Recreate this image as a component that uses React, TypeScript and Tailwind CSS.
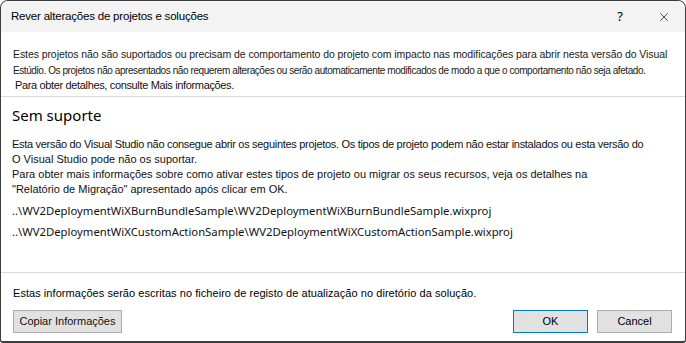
import { X } from 'lucide-react';

const seg = "font-['Noto_Sans',sans-serif]";
const ms = "font-['Liberation_Sans',Arial,sans-serif]";

export default function App() {
  const paths = [
    '..\\WV2DeploymentWiXBurnBundleSample\\WV2DeploymentWiXBurnBundleSample.wixproj',
    '..\\WV2DeploymentWiXCustomActionSample\\WV2DeploymentWiXCustomActionSample.wixproj',
  ];

  return (
    <div className="w-[686px] h-[343px] bg-white">
      <div className="w-full h-full flex flex-col border border-b-2 border-[#3c3c3c] rounded-t-lg rounded-b-[3px] overflow-hidden bg-white text-black">
        {/* Title bar */}
        <div className="h-[31px] shrink-0 bg-[#f3f3f3] flex items-center pl-[10px] pr-[14px]">
          <span className={`${ms} text-[11.5px] tracking-[-0.2px] flex-1`}>Rever alterações de projetos e soluções</span>
          <span className={`${seg} text-[13px] mr-[34px]`}>?</span>
          <X className="w-[14px] h-[14px]" strokeWidth={1.2} />
        </div>

        {/* Info header */}
        <div className={`${ms} h-[65px] shrink-0 pl-[12px] pt-[14px] border-b border-[#d9d9d9] text-[#1a1a1a]`}>
          <div className="text-[10.5px] leading-[17px] whitespace-nowrap tracking-[-0.08px]">
            Estes projetos não são suportados ou precisam de comportamento do projeto com impacto nas modificações para abrir nesta versão do Visual
          </div>
          <div className="text-[10px] leading-[15px] whitespace-nowrap tracking-[-0.42px]">
            Estúdio. Os projetos não apresentados não requerem alterações ou serão automaticamente modificados de modo a que o comportamento não seja afetado.
          </div>
          <div className="text-[11px] leading-[14px] whitespace-nowrap pl-[2px] tracking-[-0.35px] text-[#111]">
            Para obter detalhes, consulte Mais informações.
          </div>
        </div>

        {/* Main content */}
        <div className="flex-1 px-[11px] pt-[7px] border-b border-[#d9d9d9]">
          <div className={`${seg} text-[15px] leading-[22px] mb-[11px]`}>Sem suporte</div>
          <div className={`${ms} text-[11px] leading-[15px] whitespace-nowrap text-[#111]`}>
            <div className="tracking-[-0.3px]">
              Esta versão do Visual Studio não consegue abrir os seguintes projetos. Os tipos de projeto podem não estar instalados ou esta versão do
            </div>
            <div>O Visual Studio pode não os suportar.</div>
            <div>
              Para obter mais informações sobre como ativar estes tipos de projeto ou migrar os seus recursos, veja os detalhes na
            </div>
            <div>"Relatório de Migração" apresentado após clicar em OK.</div>
          </div>
          <div className={`${seg} text-[11.3px] leading-[21px] mt-[3px] text-[#111]`}>
            {paths.map((p) => (
              <div key={p} className="whitespace-nowrap">{p}</div>
            ))}
          </div>
        </div>

        {/* Footer */}
        <div className={`${ms} h-[68px] shrink-0 px-[12px] pt-[12px] text-[11px]`}>
          <div className="whitespace-nowrap tracking-[0.05px]">
            Estas informações serão escritas no ficheiro de registo de atualização no diretório da solução.
          </div>
          <div className="flex items-center mt-[8px]">
            <button className="h-[23px] w-[109px] bg-[#e1e1e1] border border-[#adadad] text-[11px] text-[#111]">
              Copiar Informações
            </button>
            <div className="flex-1" />
            <button className="h-[23px] w-[75px] bg-[#e1e1e1] border border-[#0078d7] text-[11px] mr-[9px]">
              OK
            </button>
            <button className="h-[23px] w-[75px] bg-[#e1e1e1] border border-[#adadad] text-[11px] mr-[1px]">
              Cancel
            </button>
          </div>
        </div>
      </div>
    </div>
  );
}
